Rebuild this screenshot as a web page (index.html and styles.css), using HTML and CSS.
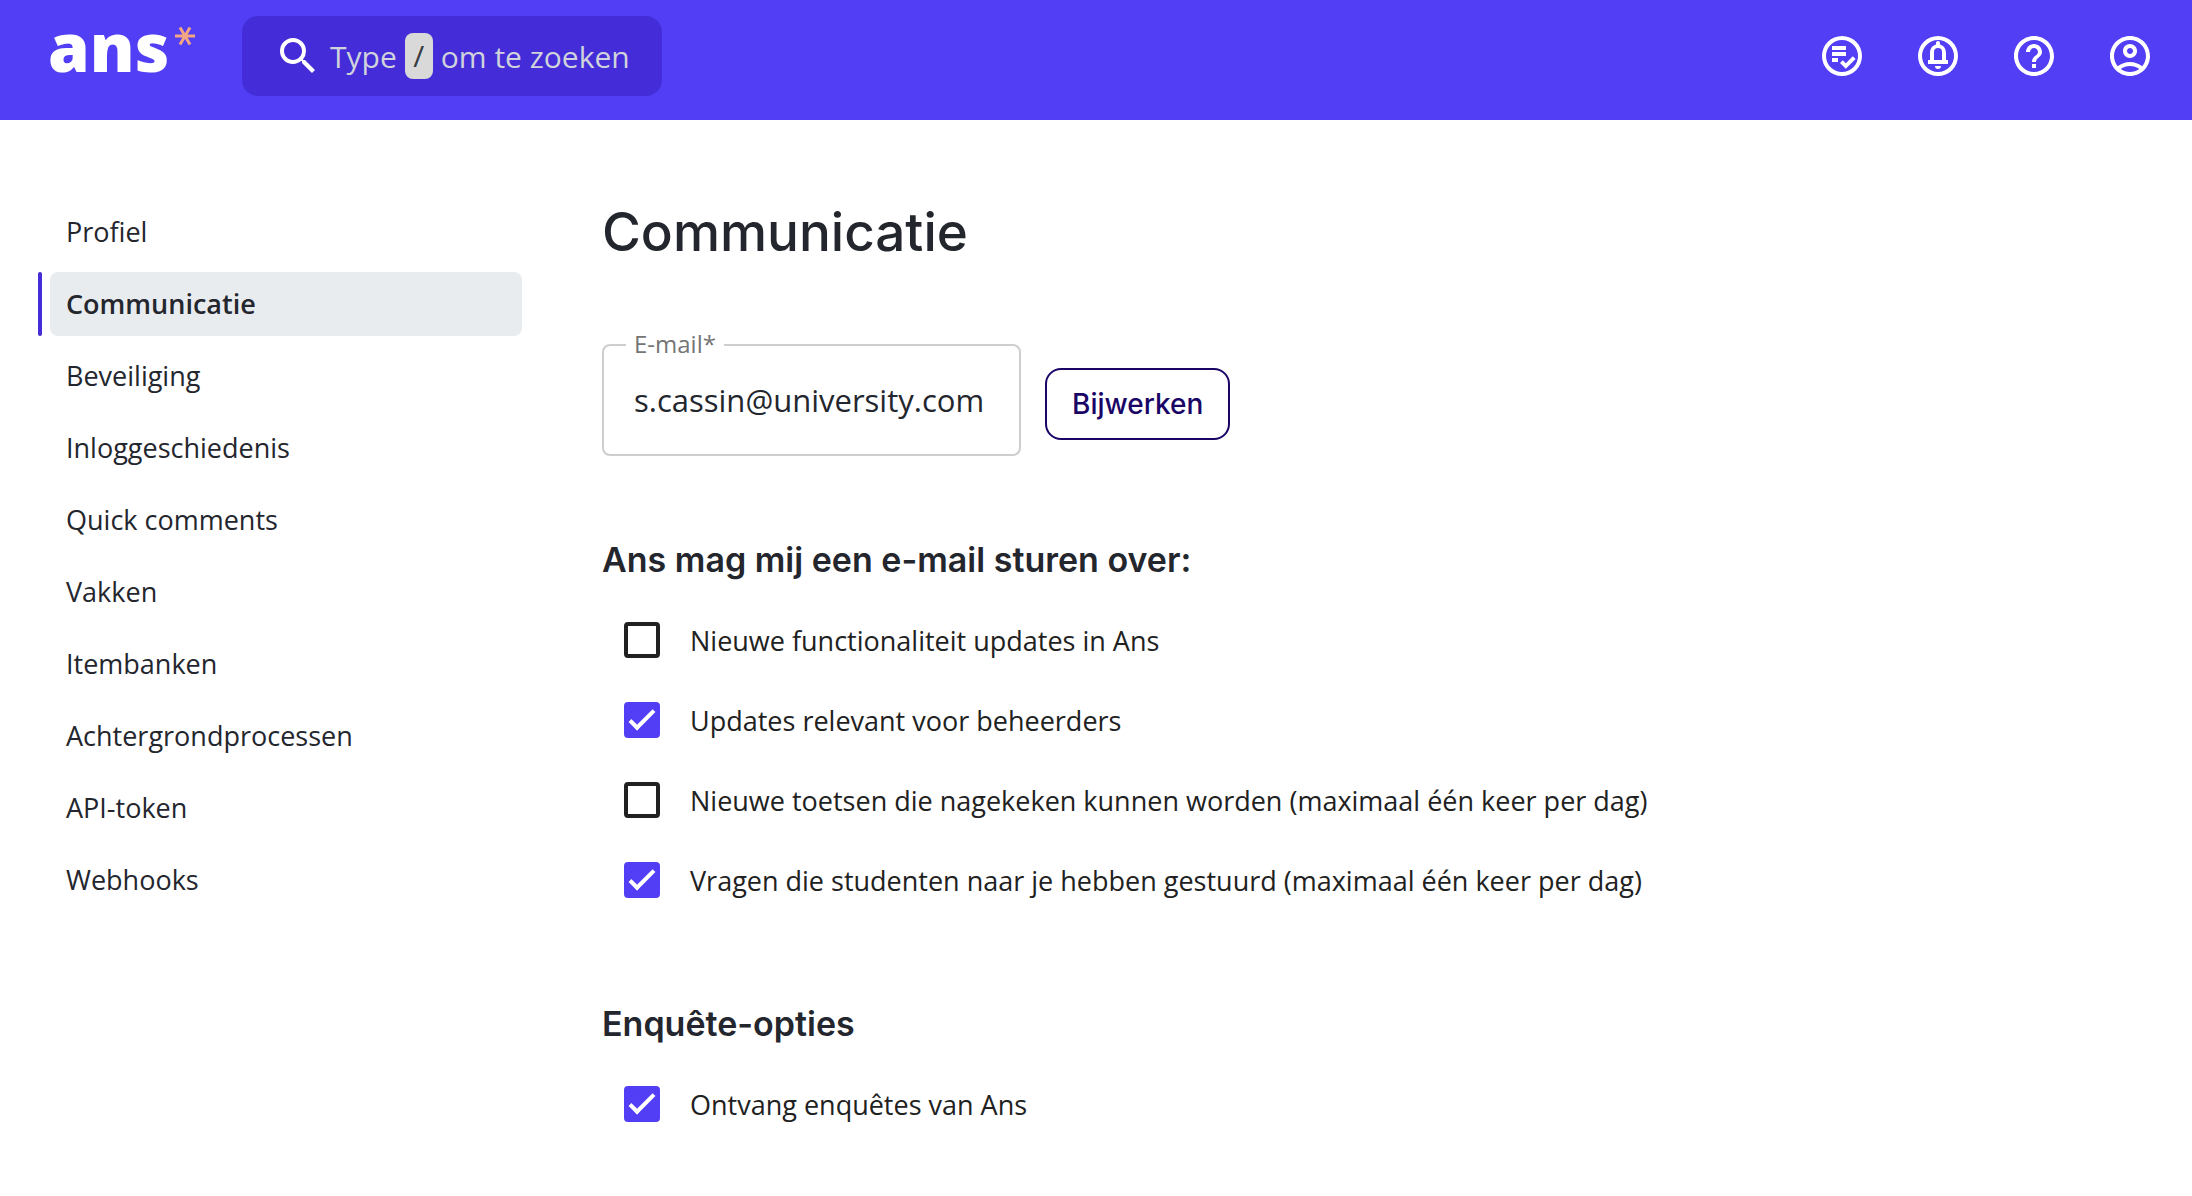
FILE: index.html
```html
<!doctype html>
<html lang="nl">
<head>
<meta charset="utf-8">
<title>Communicatie</title>
<link rel="stylesheet" href="styles.css">
</head>

<body>
<header class="topbar">
	<a class="logo" href="#">ans<svg class="star" viewBox="0 0 20 20"><path d="M0 10H20M5 1.5L15 18.5M15 1.5L5 18.5"/></svg></a>
	<button class="search" type="button">
		<svg class="icon" viewBox="0 0 24 24"><path d="M15.5 14h-.79l-.28-.27A6.47 6.47 0 0 0 16 9.5 6.5 6.5 0 1 0 9.5 16c1.61 0 3.09-.59 4.23-1.57l.27.28v.79l5 4.99L20.49 19l-4.99-5zm-6 0C7.01 14 5 11.99 5 9.5S7.01 5 9.5 5 14 7.01 14 9.5 11.99 14 9.5 14z"/></svg>
		<span>Type</span><kbd>/</kbd><span>om te zoeken</span>
	</button>
	<nav class="actions">
		<a href="#" aria-label="Nakijken"><svg class="icon" viewBox="0 0 24 24"><path d="M12 2a10 10 0 1 0 0 20 10 10 0 0 0 0-20zm0 18a8 8 0 1 1 0-16 8 8 0 0 1 0 16zM7 7h7v2H7zM7 10h7v2H7zM7 13h3v2H7zM12.4 14.1l1.5 1.5 3.5-3.5 1.4 1.4-4.9 4.9-2.9-2.9z"/></svg></a>
		<a href="#" aria-label="Meldingen"><svg class="icon" viewBox="0 0 24 24"><path d="M12 2a10 10 0 1 0 0 20 10 10 0 0 0 0-20zm0 18a8 8 0 1 1 0-16 8 8 0 0 1 0 16zM10.5 17h3a1.5 1.5 0 0 1-3 0z"/><path fill-rule="evenodd" d="M16 14v-3.6c0-2-1.06-3.65-3-4.13V5.5a1 1 0 0 0-2 0v.77C9.06 6.75 8 8.4 8 10.4V14H7v2h10v-2zm-2 0h-4v-4a2 2 0 0 1 4 0z"/></svg></a>
		<a href="#" aria-label="Help"><svg class="icon" viewBox="0 0 24 24"><path d="M11 18h2v-2h-2v2zm1-16C6.48 2 2 6.48 2 12s4.48 10 10 10 10-4.48 10-10S17.52 2 12 2zm0 18c-4.41 0-8-3.59-8-8s3.59-8 8-8 8 3.59 8 8-3.59 8-8 8zm0-14c-2.21 0-4 1.79-4 4h2c0-1.1.9-2 2-2s2 .9 2 2c0 2-3 1.75-3 5h2c0-2.25 3-2.5 3-5 0-2.21-1.79-4-4-4z"/></svg></a>
		<a href="#" aria-label="Account"><svg class="icon" viewBox="0 0 24 24"><path d="M12 2C6.48 2 2 6.48 2 12s4.48 10 10 10 10-4.48 10-10S17.52 2 12 2zM7.35 18.5C8.66 17.56 10.26 17 12 17s3.34.56 4.65 1.5C15.34 19.44 13.74 20 12 20s-3.34-.56-4.65-1.5zm10.79-1.38C16.45 15.8 14.32 15 12 15s-4.45.8-6.14 2.12C4.7 15.73 4 13.95 4 12c0-4.42 3.58-8 8-8s8 3.58 8 8c0 1.95-.7 3.73-1.86 5.12z"/><path d="M12 6c-1.93 0-3.5 1.57-3.5 3.5S10.07 13 12 13s3.5-1.57 3.5-3.5S13.93 6 12 6zm0 5c-.83 0-1.5-.67-1.5-1.5S11.17 8 12 8s1.5.67 1.5 1.5S12.83 11 12 11z"/></svg></a>
	</nav>
</header>

<div class="page">
	<nav class="sidebar">
		<a href="#">Profiel</a>
		<a href="#" class="active">Communicatie</a>
		<a href="#">Beveiliging</a>
		<a href="#">Inloggeschiedenis</a>
		<a href="#">Quick comments</a>
		<a href="#">Vakken</a>
		<a href="#">Itembanken</a>
		<a href="#">Achtergrondprocessen</a>
		<a href="#">API-token</a>
		<a href="#">Webhooks</a>
	</nav>
	<main class="content">
		<h1>Communicatie</h1>
		<form class="email-form">
			<div class="field">
				<label for="email">E-mail*</label>
				<input type="email" id="email" value="s.cassin@university.com">
			</div>
			<button class="btn" type="button">Bijwerken</button>
		</form>

		<h2>Ans mag mij een e-mail sturen over:</h2>
		<label class="check"><input type="checkbox">Nieuwe functionaliteit updates in Ans</label>
		<label class="check"><input type="checkbox" checked>Updates relevant voor beheerders</label>
		<label class="check"><input type="checkbox">Nieuwe toetsen die nagekeken kunnen worden (maximaal één keer per dag)</label>
		<label class="check"><input type="checkbox" checked>Vragen die studenten naar je hebben gestuurd (maximaal één keer per dag)</label>

		<h2>Enquête-opties</h2>
		<label class="check"><input type="checkbox" checked>Ontvang enquêtes van Ans</label>
	</main>
</div>
</body>
</html>
```
FILE: styles.css
```css
*{box-sizing: border-box;margin: 0;padding: 0;}
body{
	background: #ffffff;
	color: #24262e;
	font-family: "Open Sans", sans-serif;
	font-size: 27px;
}
a{
	color: inherit;
	text-decoration: none;
}
button,input{
	font-family: inherit;
}
.icon{
	display: block;
	width: 48px;
	height: 48px;
	fill: #ffffff;
}

/* top bar */
.topbar{
	display: flex;
	align-items: center;
	height: 120px;
	padding: 0 38px 8px 48px;
	background: #523ef5;
}
.logo{
	display: flex;
	width: 194px;
	height: 80px;
	color: #ffffff;
	font-size: 67px;
	font-weight: 800;
	line-height: 60px;
}
.star{
	width: 20px;
	height: 20px;
	margin: 10px 0 0 6px;
	fill: none;
	stroke: #f3a683;
	stroke-width: 3;
}
.search{
	display: flex;
	align-items: center;
	gap: 8px;
	height: 80px;
	padding: 0 32px;
	border: none;
	border-radius: 16px;
	background: #442dd8;
	color: #d0d3dc;
	font-size: 30px;
	cursor: pointer;
}
.search kbd{
	width: 28px;
	border-radius: 8px;
	background: #d9d9d9;
	color: #383b42;
	font-family: inherit;
	line-height: 46px;
	text-align: center;
}
.actions{
	display: flex;
	gap: 48px;
	margin-left: auto;
}

.page{
	display: flex;
	gap: 80px;
	padding: 80px 50px 52px;
}

/* menu on the left */
.sidebar{
	display: flex;
	flex: 0 0 472px;
	flex-direction: column;
	gap: 8px;
}
.sidebar a{
	position: relative;
	padding: 0 16px;
	border-radius: 8px;
	line-height: 64px;
}
.sidebar .active{
	background: #e8ecef;
	font-weight: 600;
}
.sidebar .active::before{
	content: "";
	position: absolute;
	top: 0;
	bottom: 0;
	left: -12px;
	width: 4px;
	border-radius: 2px;
	background: #442dd8;
}

.content{
	flex: 1;
}
h1,h2,.btn{
	font-family: Inter, sans-serif;
	font-weight: 500;
}
h1{
	font-size: 53px;
	line-height: 64px;
}
h2{
	margin: 80px 0 16px;
	font-size: 34px;
	font-weight: 600;
	line-height: 48px;
}
.email-form{
	display: flex;
	align-items: center;
	gap: 24px;
	margin-top: 80px;
}
.field{
	position: relative;
}
.field label{
	position: absolute;
	top: -16px;
	left: 24px;
	padding: 0 8px;
	background: #ffffff;
	color: #757575;
	font-size: 24px;
	line-height: 32px;
}
.field input{
	display: block;
	width: 419px;
	height: 112px;
	padding: 0 30px;
	border: 2px solid #cecece;
	border-radius: 8px;
	background: none;
	color: #24262e;
	font-size: 31px;
}
.btn{
	height: 72px;
	margin-top: 8px;
	padding: 0 25px;
	border: 2px solid #1a0567;
	border-radius: 16px;
	background: #ffffff;
	color: #1a0567;
	font-size: 28px;
	cursor: pointer;
}

/* tick boxes */
.check{
	display: flex;
	align-items: center;
	gap: 30px;
	height: 80px;
	padding-left: 22px;
	color: #212121;
}
.check input{
	position: relative;
	width: 36px;
	height: 36px;
	border: 4px solid #212121;
	border-radius: 4px;
	appearance: none;
}
.check input:checked{
	border-color: #523ef5;
	background: #523ef5;
}
.check input:checked::before{
	content: "";
	position: absolute;
	top: -2px;
	left: 8px;
	width: 8px;
	height: 22px;
	border: solid #ffffff;
	border-width: 0 4px 4px 0;
	transform: rotate(45deg);
}
```
